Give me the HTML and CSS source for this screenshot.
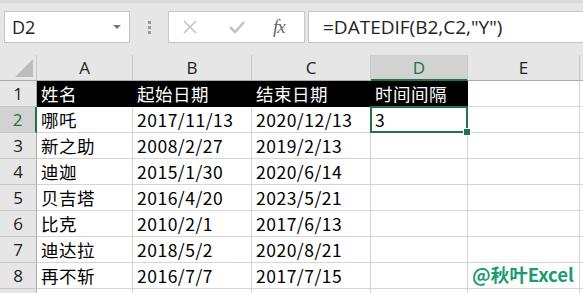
FILE: index.html
```html
<!DOCTYPE html>
<html lang="zh-CN">
<head>
  <meta charset="UTF-8">
  <link rel="stylesheet" href="styles.css">
  <title>DATEDIF</title>
</head>
<body>
  <div class="toolbar">
    <div class="name-box">
      <span>D2</span>
      <span class="caret"></span>
    </div>
    <div class="grip"><i></i><i></i><i></i></div>
    <div class="fx-buttons">
      <svg class="btn-x" width="16" height="16" viewBox="0 0 16 16"><path d="M2 2L14 14M14 2L2 14" stroke="#c4c4c4" stroke-width="1.6" fill="none"/></svg>
      <svg class="btn-ok" width="18" height="16" viewBox="0 0 18 16"><path d="M2 8L7 13L16 3" stroke="#c4c4c4" stroke-width="2.6" fill="none"/></svg>
      <span class="fx">fx</span>
    </div>
    <div class="formula">=DATEDIF(B2,C2,"Y")</div>
  </div>

  <div class="sheet">
    <div class="corner"><span></span></div>
    <div class="col-head">A</div>
    <div class="col-head">B</div>
    <div class="col-head">C</div>
    <div class="col-head active">D</div>
    <div class="col-head">E</div>
    <div class="col-head rest"></div>

    <div class="row-head">1</div>
    <div class="cell dark">姓名</div>
    <div class="cell dark">起始日期</div>
    <div class="cell dark">结束日期</div>
    <div class="cell dark">时间间隔</div>
    <div class="cell"></div>
    <div class="cell"></div>

    <div class="row-head active">2</div>
    <div class="cell">哪吒</div>
    <div class="cell">2017/11/13</div>
    <div class="cell">2020/12/13</div>
    <div class="cell selected">3</div>
    <div class="cell"></div>
    <div class="cell"></div>

    <div class="row-head">3</div>
    <div class="cell">新之助</div>
    <div class="cell">2008/2/27</div>
    <div class="cell">2019/2/13</div>
    <div class="cell"></div>
    <div class="cell"></div>
    <div class="cell"></div>

    <div class="row-head">4</div>
    <div class="cell">迪迦</div>
    <div class="cell">2015/1/30</div>
    <div class="cell">2020/6/14</div>
    <div class="cell"></div>
    <div class="cell"></div>
    <div class="cell"></div>

    <div class="row-head">5</div>
    <div class="cell">贝吉塔</div>
    <div class="cell">2016/4/20</div>
    <div class="cell">2023/5/21</div>
    <div class="cell"></div>
    <div class="cell"></div>
    <div class="cell"></div>

    <div class="row-head">6</div>
    <div class="cell">比克</div>
    <div class="cell">2010/2/1</div>
    <div class="cell">2017/6/13</div>
    <div class="cell"></div>
    <div class="cell"></div>
    <div class="cell"></div>

    <div class="row-head">7</div>
    <div class="cell">迪达拉</div>
    <div class="cell">2018/5/2</div>
    <div class="cell">2020/8/21</div>
    <div class="cell"></div>
    <div class="cell"></div>
    <div class="cell"></div>

    <div class="row-head">8</div>
    <div class="cell">再不斩</div>
    <div class="cell">2016/7/7</div>
    <div class="cell">2017/7/15</div>
    <div class="cell"></div>
    <div class="cell"></div>
    <div class="cell"></div>

    <div class="row-head"></div>
    <div class="cell"></div>
    <div class="cell"></div>
    <div class="cell"></div>
    <div class="cell"></div>
    <div class="cell"></div>
    <div class="cell"></div>

    <div class="watermark">@秋叶Excel</div>
  </div>
</body>
</html>
```

FILE: styles.css
```css
* {
  box-sizing: border-box;
}

html,
body {
  margin: 0;
  width: 583px;
  height: 293px;
  overflow: hidden;
  background: #fff;
  font-family: "Noto Sans CJK SC", "Noto Sans", sans-serif;
}

/* barre de formule */
.toolbar {
  height: 55px;
  background: #e6e6e6;
  border-top: 3px solid #dadada;
  display: flex;
  align-items: flex-start;
  padding-top: 8px;
  padding-left: 4px;
}

.name-box {
  width: 126px;
  height: 32px;
  background: #fff;
  border: 1px solid #c6c6c6;
  display: flex;
  align-items: center;
  justify-content: space-between;
  padding: 0 8px 0 7px;
  font-family: "Open Sans", "Liberation Sans", sans-serif;
  font-size: 18px;
  color: #222;
}

.caret {
  width: 0;
  height: 0;
  border-left: 4px solid transparent;
  border-right: 4px solid transparent;
  border-top: 4px solid #777;
}

.grip {
  width: 38px;
  height: 32px;
  display: flex;
  flex-direction: column;
  align-items: center;
  justify-content: center;
  gap: 2px;
}

.grip i {
  width: 3px;
  height: 3px;
  background: #9a9a9a;
}

.fx-buttons {
  width: 137px;
  height: 32px;
  background: #fff;
  border: 1px solid #c6c6c6;
  display: flex;
  align-items: center;
  padding-left: 13px;
}

.btn-ok {
  margin-left: 30px;
}

.fx {
  margin-left: 27px;
  font-family: "Liberation Serif", serif;
  font-style: italic;
  font-size: 19px;
  color: #666;
  letter-spacing: -1px;
}

.formula {
  flex: 1;
  height: 32px;
  margin-left: 3px;
  background: #fff;
  border: 1px solid #c6c6c6;
  border-right: none;
  padding-left: 14px;
  font-family: "Open Sans", "Liberation Sans", sans-serif;
  font-size: 19px;
  line-height: 30px;
  color: #222;
}

/* feuille */
.sheet {
  position: relative;
  display: grid;
  grid-template-columns: 37px 96px 119px 119px 97px 112px 1fr;
  grid-auto-rows: 26px;
}

.corner,
.col-head,
.row-head {
  background: #e6e6e6;
  border-right: 1px solid #c8c8c8;
  border-bottom: 1px solid #ababab;
  display: flex;
  align-items: center;
  justify-content: center;
  font-family: "Open Sans", "Liberation Sans", sans-serif;
  font-size: 17px;
  color: #222;
}

.corner {
  justify-content: flex-end;
  align-items: flex-end;
  padding: 0 3px 3px 0;
}

.corner span {
  width: 0;
  height: 0;
  border-left: 18px solid transparent;
  border-bottom: 18px solid #bcbcbc;
}

.col-head.active {
  background: #d2d2d2;
  color: #217346;
  border-bottom: 2px solid #217346;
}

.row-head {
  border-bottom: 1px solid #c8c8c8;
  border-right: 1px solid #ababab;
}

.row-head.active {
  background: #d2d2d2;
  color: #217346;
  border-right: 2px solid #217346;
}

.cell {
  border-right: 1px solid #d4d4d4;
  border-bottom: 1px solid #d4d4d4;
  display: flex;
  align-items: center;
  padding-left: 4px;
  font-size: 17.5px;
  letter-spacing: 0.5px;
  color: #000;
  white-space: nowrap;
}

.cell.dark {
  background: #000;
  color: #fff;
  border-color: #000;
}

.cell.selected {
  position: relative;
}

.cell.selected::after {
  content: "";
  position: absolute;
  left: -1px;
  top: -1px;
  right: -1px;
  bottom: -1px;
  border: 2px solid #217346;
}

.cell.selected::before {
  content: "";
  position: absolute;
  right: -4px;
  bottom: -4px;
  width: 6px;
  height: 6px;
  background: #217346;
  border: 1px solid #fff;
  z-index: 1;
}

.watermark {
  position: absolute;
  left: 472px;
  top: 206px;
  font-size: 18.5px;
  font-weight: bold;
  color: #1a9c6e;
}
```
